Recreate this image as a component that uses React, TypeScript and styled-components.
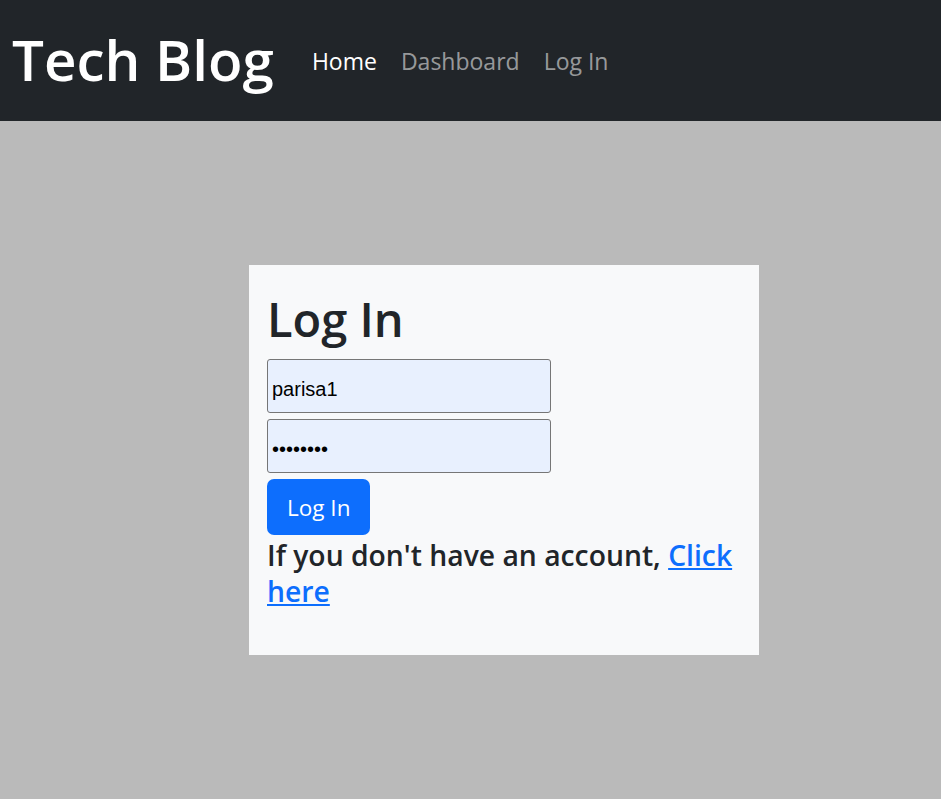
import React from 'react'
import styled, { createGlobalStyle } from 'styled-components'

const GlobalStyle = createGlobalStyle`
  body {
    margin: 0;
    background: #ffffff;
    font-family: 'Open Sans', 'Noto Sans', sans-serif;
    color: #212529;
  }
  * {
    box-sizing: border-box;
  }
`

const Page = styled.div`
  width: 941px;
  min-height: 799px;
  background-color: #bababa;
`

const Navbar = styled.nav`
  height: 121px;
  background-color: #212529;
  display: flex;
  align-items: center;
  padding-left: 12px;
`

const Brand = styled.a`
  color: #ffffff;
  font-size: 56.5px;
  font-weight: 600;
  text-decoration: none;
  margin-right: 38px;
  margin-top: -2px;
`

const NavLinks = styled.div`
  display: flex;
  gap: 24px;
`

const NavLink = styled.a<{ $active?: boolean }>`
  color: ${({ $active }) => ($active ? '#ffffff' : 'rgba(255, 255, 255, 0.55)')};
  font-size: 23px;
  text-decoration: none;
`

const Main = styled.main`
  padding: 144px 0 0 249px;
`

const Card = styled.div`
  width: 510px;
  height: 390px;
  background-color: #f8f9fa;
  padding: 26px 18px;
`

const Title = styled.h1`
  font-size: 47px;
  font-weight: 600;
  line-height: 1.2;
  margin: 0 0 12px 0;
`

const Form = styled.form`
  display: flex;
  flex-direction: column;
  align-items: flex-start;
  gap: 6px;
`

const Input = styled.input`
  width: 284px;
  height: 54px;
  background-color: #e8f0fe;
  border: 1px solid #767676;
  border-radius: 3px;
  padding: 6px 4px 0;
  font-family: 'Liberation Sans', Arial, sans-serif;
  font-size: 20px;
  color: #000000;
  outline: none;
`

const Button = styled.button`
  background-color: #0d6efd;
  color: #ffffff;
  border: none;
  border-radius: 7px;
  height: 56px;
  padding: 0 20px;
  font-family: 'Open Sans', 'Noto Sans', sans-serif;
  font-size: 22.5px;
`

const Hint = styled.p`
  font-size: 28.3px;
  font-weight: 600;
  line-height: 36px;
  margin: 2px 0 0 0;
`

const HintLink = styled.a`
  color: #0d6efd;
  text-decoration: underline;
`

export default function App() {
  return (
    <Page>
      <GlobalStyle />
      <Navbar>
        <Brand href='#'>Tech Blog</Brand>
        <NavLinks>
          <NavLink href='#' $active>
            Home
          </NavLink>
          <NavLink href='#'>Dashboard</NavLink>
          <NavLink href='#'>Log In</NavLink>
        </NavLinks>
      </Navbar>
      <Main>
        <Card>
          <Title>Log In</Title>
          <Form onSubmit={(e) => e.preventDefault()}>
            <Input type='text' defaultValue='parisa1' />
            <Input type='password' defaultValue='parisa12' />
            <Button type='submit'>Log In</Button>
          </Form>
          <Hint>
            If you don't have an account, <HintLink href='#'>Click here</HintLink>
          </Hint>
        </Card>
      </Main>
    </Page>
  )
}
